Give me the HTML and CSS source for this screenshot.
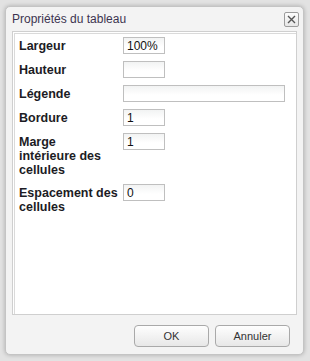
FILE: index.html
```html
<!DOCTYPE html>
<html lang="fr">
<head>
	<meta charset="UTF-8">
	<title>Propriétés du tableau</title>
	<link rel="stylesheet" href="styles.css">
</head>
<body>

	<div class="backdrop">
		<div class="dialog">
			<div class="dialog-title">
				<span>Propriétés du tableau</span>
				<a class="close-btn" title="Fermer">
					<svg width="9" height="9" viewBox="0 0 9 9">
						<path d="M1 1 L8 8 M8 1 L1 8" stroke="#555" stroke-width="1.4" fill="none"/>
					</svg>
				</a>
			</div>

			<div class="dialog-body">
				<div class="row">
					<label for="largeur">Largeur</label>
					<input type="text" id="largeur" class="small" value="100%">
				</div>
				<div class="row">
					<label for="hauteur">Hauteur</label>
					<input type="text" id="hauteur" class="small">
				</div>
				<div class="row">
					<label for="legende">Légende</label>
					<input type="text" id="legende" class="wide">
				</div>
				<div class="row">
					<label for="bordure">Bordure</label>
					<input type="text" id="bordure" class="small" value="1">
				</div>
				<div class="row">
					<label for="marge">Marge<br>intérieure des cellules</label>
					<input type="text" id="marge" class="small" value="1">
				</div>
				<div class="row">
					<label for="espacement">Espacement des cellules</label>
					<input type="text" id="espacement" class="small" value="0">
				</div>
			</div>

			<div class="dialog-footer">
				<button type="button">OK</button>
				<button type="button">Annuler</button>
			</div>
		</div>
	</div>

</body>
</html>
```

FILE: styles.css
```css
body {
	margin: 0;
	background-color: #e2e2e2;
	font-family: "Liberation Sans", Arial, sans-serif;
}

.backdrop {
	width: 310px;
	height: 361px;
	padding: 6px 0 0 5px;
	box-sizing: border-box;
}

.dialog {
	width: 299px;
	height: 349px;
	box-sizing: border-box;
	background-color: #f3f3f3;
	border: 1px solid #c4c4c4;
	border-radius: 5px;
	box-shadow: 0 0 4px rgba(0, 0, 0, 0.25);
	display: flex;
	flex-direction: column;
}

.dialog-title {
	height: 24px;
	display: flex;
	align-items: center;
	justify-content: space-between;
	padding: 0 4px 0 6px;
	font-size: 12px;
	color: #3c3450;
}

.close-btn {
	width: 13px;
	height: 13px;
	border: 1px solid #9c9c9c;
	border-radius: 2px;
	background: linear-gradient(#fdfdfd, #e6e6e6);
	display: flex;
	align-items: center;
	justify-content: center;
}

.dialog-body {
	margin: 0 6px;
	height: 284px;
	box-sizing: border-box;
	background-color: #fff;
	border: 1px solid #cfcfcf;
	box-shadow: inset 1px 1px 0 #fff, inset 2px 2px 0 #dadada;
	padding: 5px 6px;
}

.row {
	display: flex;
	align-items: flex-start;
	margin-bottom: 7px;
}

.row label {
	width: 101px;
	margin-right: 3px;
	padding-top: 2px;
	font-size: 12.5px;
	font-weight: bold;
	line-height: 14px;
	color: #1c1c24;
}

input[type="text"] {
	height: 17px;
	box-sizing: border-box;
	margin: 0;
	padding: 0 3px;
	border: 1px solid #bfbfbf;
	background: linear-gradient(#f2f3f3, #fff 60%);
	font-family: "Liberation Sans", Arial, sans-serif;
	font-size: 12px;
	color: #111;
}

.small {
	width: 42px;
}

.wide {
	width: 162px;
}

.dialog-footer {
	flex: 1;
	display: flex;
	justify-content: flex-end;
	align-items: flex-start;
	gap: 6px;
	padding: 10px 13px 0 0;
}

button {
	width: 75px;
	height: 22px;
	border: 1px solid #a9a9a9;
	border-radius: 4px;
	background: linear-gradient(#fefefe, #e7e7e7);
	font-family: "Liberation Sans", Arial, sans-serif;
	font-size: 11px;
	color: #333;
}
```
